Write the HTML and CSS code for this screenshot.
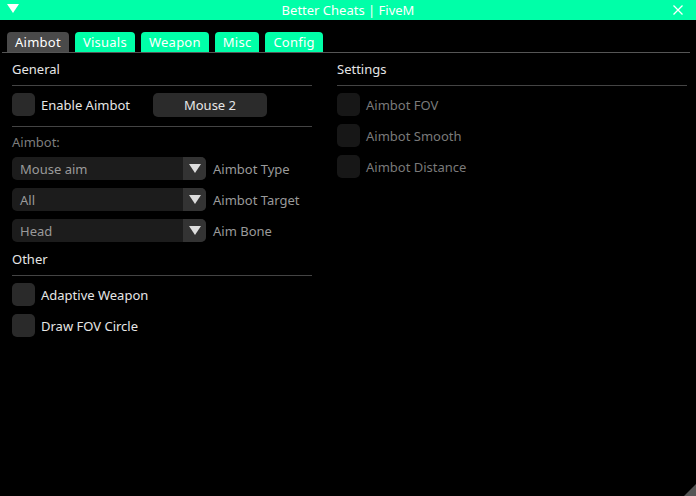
FILE: index.html
```html
<!DOCTYPE html>
<html>
<head>
<meta charset="utf-8">
<link rel="stylesheet" href="styles.css">
</head>
<body>
<div class="window">
  <div class="titlebar">
    <svg class="collapse" width="12" height="10" viewBox="0 0 12 10"><polygon points="0,0 12,0 6,9" fill="#fff"/></svg>
    <div class="title">Better Cheats | FiveM</div>
    <svg class="close" width="12" height="12" viewBox="0 0 12 12"><path d="M1.5 1.5 L10.5 10.5 M10.5 1.5 L1.5 10.5" stroke="#fff" stroke-width="1.3"/></svg>
  </div>
  <div class="tabs">
    <div class="tab active">Aimbot</div>
    <div class="tab">Visuals</div>
    <div class="tab">Weapon</div>
    <div class="tab">Misc</div>
    <div class="tab">Config</div>
  </div>
  <div class="content">
    <div class="col left">
      <div class="header">General</div>
      <div class="sep"></div>
      <div class="row">
        <div class="check"></div><span class="label">Enable Aimbot</span>
        <div class="button">Mouse 2</div>
      </div>
      <div class="sep sep2"></div>
      <div class="subhead">Aimbot:</div>
      <div class="combo-row"><div class="combo"><span class="combo-val">Mouse aim</span><div class="arrow"><svg width="12" height="10" viewBox="0 0 12 10"><polygon points="0,0 12,0 6,9" fill="#ddd"/></svg></div></div><span class="label dim">Aimbot Type</span></div>
      <div class="combo-row"><div class="combo"><span class="combo-val">All</span><div class="arrow"><svg width="12" height="10" viewBox="0 0 12 10"><polygon points="0,0 12,0 6,9" fill="#ddd"/></svg></div></div><span class="label dim">Aimbot Target</span></div>
      <div class="combo-row"><div class="combo"><span class="combo-val">Head</span><div class="arrow"><svg width="12" height="10" viewBox="0 0 12 10"><polygon points="0,0 12,0 6,9" fill="#ddd"/></svg></div></div><span class="label dim">Aim Bone</span></div>
      <div class="header other">Other</div>
      <div class="sep"></div>
      <div class="row"><div class="check"></div><span class="label">Adaptive Weapon</span></div>
      <div class="row"><div class="check"></div><span class="label">Draw FOV Circle</span></div>
    </div>
    <div class="col right">
      <div class="header">Settings</div>
      <div class="sep"></div>
      <div class="row"><div class="check off"></div><span class="label gray">Aimbot FOV</span></div>
      <div class="row"><div class="check off"></div><span class="label gray">Aimbot Smooth</span></div>
      <div class="row"><div class="check off"></div><span class="label gray">Aimbot Distance</span></div>
    </div>
  </div>
  <div class="grip"></div>
</div>
</body>
</html>
```
FILE: styles.css
```css
html, body {
  margin: 0;
  padding: 0;
  background: #000;
}
body {
  font-family: "Noto Sans", "Inter", sans-serif;
  font-size: 13px;
  color: #e6e6e6;
}
.window {
  position: relative;
  width: 696px;
  height: 496px;
  background: #000;
  overflow: hidden;
}
.titlebar {
  height: 20px;
  background: #00ffa8;
  display: flex;
  align-items: center;
  position: relative;
}
.collapse {
  position: absolute;
  left: 7px;
  top: 4px;
}
.close {
  position: absolute;
  right: 12px;
  top: 4px;
}
.title {
  flex: 1;
  text-align: center;
  color: #fff;
  font-size: 13px;
  line-height: 20px;
}
.tabs {
  display: flex;
  gap: 6px;
  padding: 12px 0 0 5px;
  margin: 0 6px 0 2px;
  border-bottom: 1px solid #555;
}
.tab {
  height: 20px;
  line-height: 20px;
  padding: 0 8px;
  background: #00ffa8;
  color: #fff;
  border-radius: 4px 4px 0 0;
  letter-spacing: 0.25px;
}
.tab.active {
  background: #4a4a4a;
}
.content {
  display: flex;
  padding: 8px 9px 0 12px;
  gap: 25px;
}
.col.left {
  width: 300px;
}
.col.right {
  flex: 1;
}
.header {
  line-height: 17px;
  height: 17px;
  color: #e6e6e6;
}
.header.other {
  margin-top: 9px;
}
.sep {
  height: 1px;
  background: #444;
  margin: 7px 0 7px;
}
.sep2 {
  margin-top: 10px;
  margin-bottom: 7px;
}
.row {
  display: flex;
  align-items: center;
  height: 23px;
  margin-bottom: 8px;
}
.check {
  width: 23px;
  height: 23px;
  border-radius: 5px;
  background: #2a2a2a;
  flex: none;
}
.check.off {
  background: #171717;
}
.label {
  margin-left: 6px;
  white-space: nowrap;
}
.label.dim {
  color: #9a9a9a;
  margin-left: 7px;
}
.label.gray {
  color: #7a7a7a;
  margin-left: 6px;
}
.button {
  margin-left: 23px;
  width: 114px;
  height: 24px;
  line-height: 24px;
  text-align: center;
  background: #2b2b2b;
  border-radius: 5px;
}
.subhead {
  color: #7d7d7d;
  line-height: 17px;
  height: 17px;
  margin-bottom: 6px;
}
.combo-row {
  display: flex;
  align-items: center;
  height: 23px;
  margin-bottom: 8px;
}
.combo {
  width: 194px;
  height: 23px;
  background: #1c1c1c;
  border-radius: 5px;
  display: flex;
  align-items: center;
  overflow: hidden;
  flex: none;
}
.combo-val {
  flex: 1;
  padding-left: 8px;
  color: #9a9a9a;
}
.arrow {
  width: 23px;
  height: 23px;
  background: #333;
  display: flex;
  align-items: center;
  justify-content: center;
}
.grip {
  position: absolute;
  right: 0;
  bottom: 0;
  width: 0;
  height: 0;
  border-style: solid;
  border-width: 0 0 12px 12px;
  border-color: transparent transparent #555 transparent;
}
```
